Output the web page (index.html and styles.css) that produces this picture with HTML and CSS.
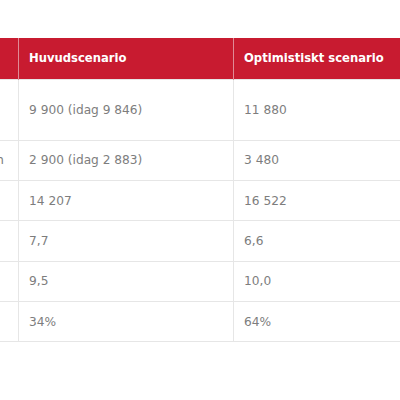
FILE: index.html
```html
<!DOCTYPE html>
<html lang="sv">
<head>
<meta charset="utf-8">
<link rel="stylesheet" href="styles.css">
</head>
<body>
<div class="wrap">
<table class="scen">
  <colgroup>
    <col class="k1">
    <col class="k2">
    <col class="k3">
  </colgroup>
  <thead>
    <tr>
      <th></th>
      <th>Huvudscenario</th>
      <th>Optimistiskt scenario</th>
    </tr>
  </thead>
  <tbody>
    <tr class="tall">
      <td class="c1"></td>
      <td>9 900 (idag 9 846)</td>
      <td>11 880</td>
    </tr>
    <tr>
      <td class="c1"><span class="tail">Stockholm</span></td>
      <td>2 900 (idag 2 883)</td>
      <td>3 480</td>
    </tr>
    <tr>
      <td class="c1"></td>
      <td>14 207</td>
      <td>16 522</td>
    </tr>
    <tr>
      <td class="c1"></td>
      <td>7,7</td>
      <td>6,6</td>
    </tr>
    <tr>
      <td class="c1"></td>
      <td>9,5</td>
      <td>10,0</td>
    </tr>
    <tr>
      <td class="c1"></td>
      <td>34%</td>
      <td>64%</td>
    </tr>
  </tbody>
</table>
</div>
</body>
</html>
```
FILE: styles.css
```css
html, body {
  margin: 0;
  padding: 0;
  background: #ffffff;
  overflow: hidden;
}
.wrap {
  padding-top: 38px;
  width: 400px;
  overflow: hidden;
}
.scen {
  border-collapse: collapse;
  table-layout: fixed;
  width: 598px;
  margin-left: -150px;
  font-family: "DejaVu Sans", sans-serif;
  font-size: 12.2px;
}
.k1 { width: 168px; }
.k2 { width: 215px; }
.k3 { width: 215px; }
.scen th {
  background: #c81b30;
  color: #ffffff;
  font-weight: bold;
  font-size: 11.6px;
  text-align: left;
  height: 41px;
  padding: 0 10px;
  border-left: 1px solid #e08a96;
  box-sizing: border-box;
}
.scen td {
  color: #7d7d7d;
  text-align: left;
  height: 40.4px;
  padding: 0 10px;
  border: 1px solid #e6e6e6;
  box-sizing: border-box;
  white-space: nowrap;
}
.scen td.c1 {
  text-align: right;
  padding-right: 14px;
}
.scen tr.tall td { height: 61px; }
```
